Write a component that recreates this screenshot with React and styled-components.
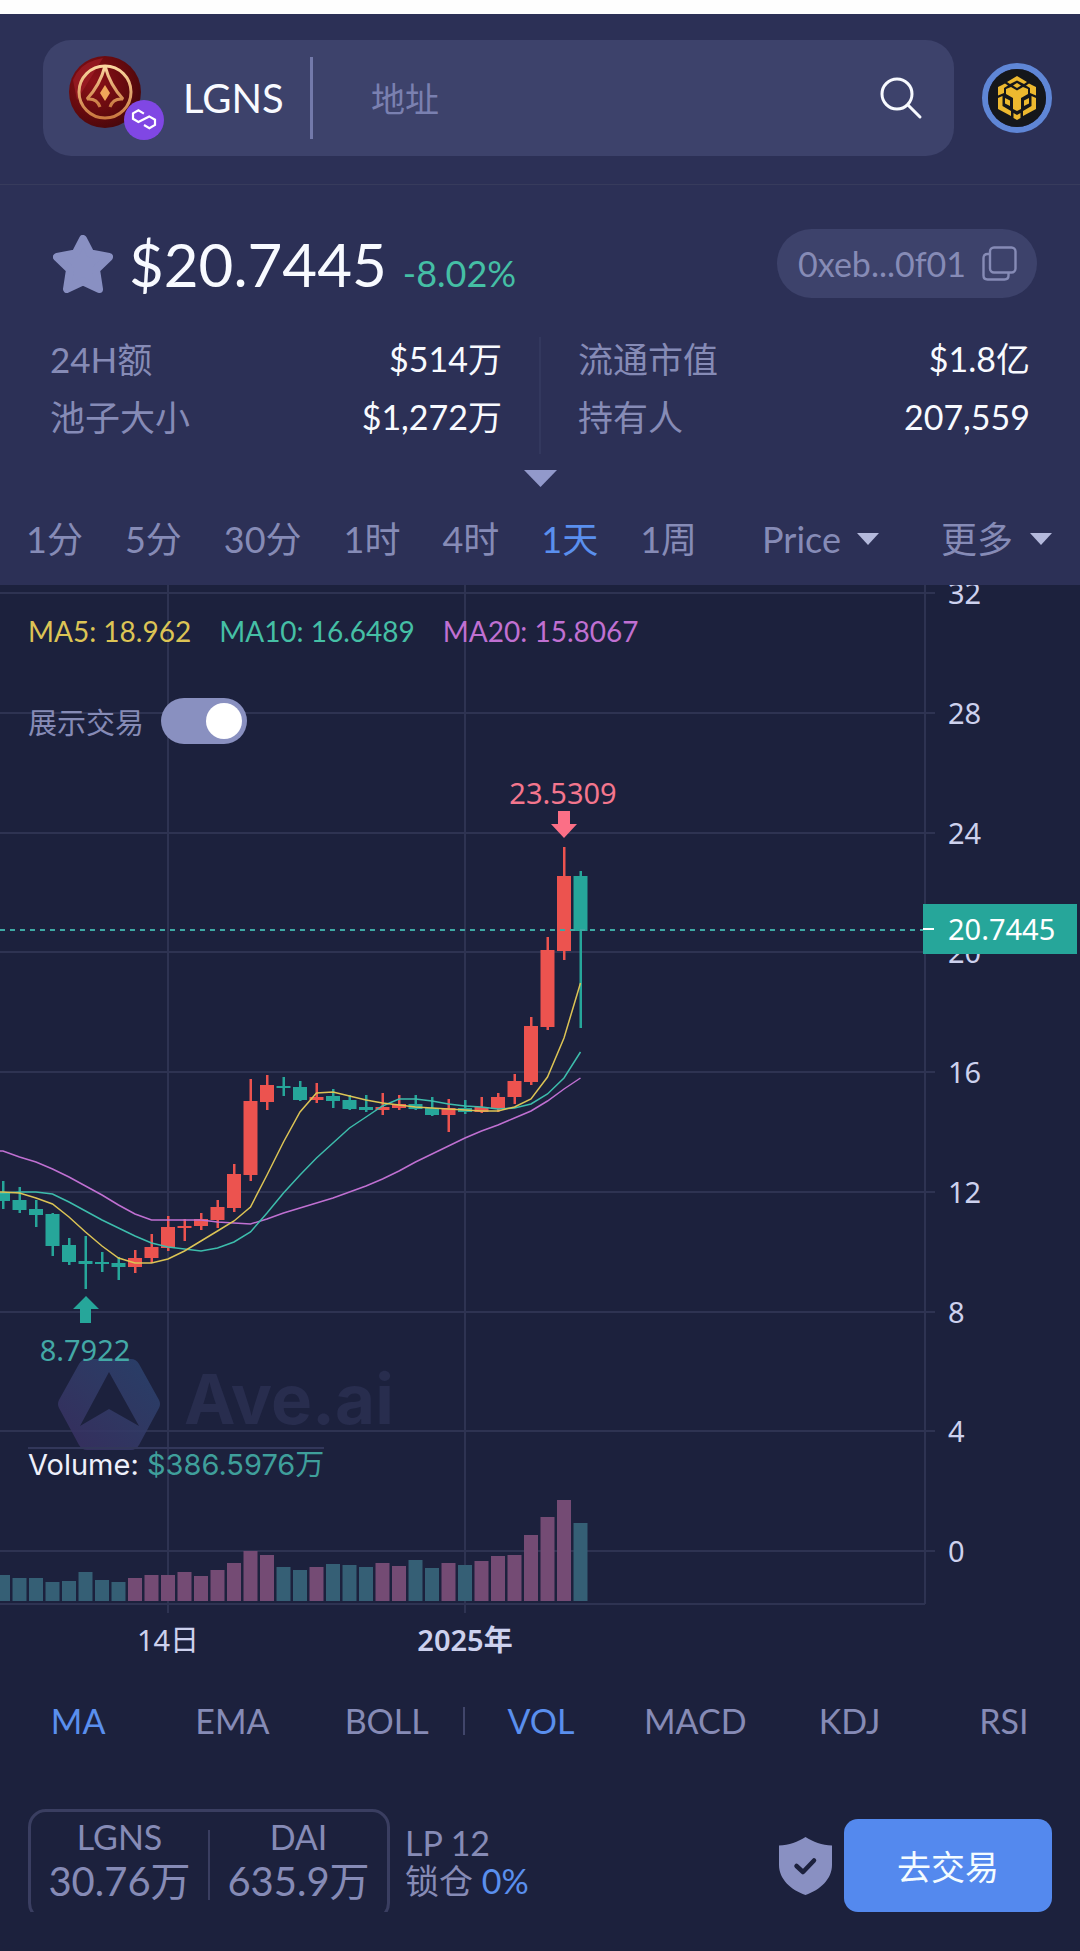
import React, { useState } from 'react'
import styled, { createGlobalStyle, ThemeProvider } from 'styled-components';

const theme = {
  colors: {
    panel: '#2c3056',
    field: '#3d426b',
    bg: '#1c213d',
    muted: '#868bb6',
    white: '#f8faff',
    blue: '#5a8fee',
    green: '#45bfa5',
    up: '#ec534f',
    down: '#26a69a',
    upVol: '#744b74',
    downVol: '#355f75',
    grid: '#2e3352',
    axis: '#cdd1ee',
    yellow: '#dcc455',
    purple: '#c070d2',
  },
};

const GlobalStyle = createGlobalStyle`
  * {
    box-sizing: border-box;
    margin: 0;
    padding: 0;
  }
  body {
    background: #1c213d;
    font-family: Lato, "Noto Sans CJK SC", sans-serif;
  }
  button, input, select {
    font: inherit;
    color: inherit;
    background: none;
    border: 0;
    outline: 0;
  }
  button, select {
    cursor: pointer;
  }
  svg {
    display: block;
    flex: none;
  }
`;

// [color, high, body top, body bottom, low, volume]
const candles = [
  ['d', 596, 608, 616, 624, 26],
  ['d', 602, 615, 625, 628, 23],
  ['d', 615, 624, 630, 642, 23],
  ['d', 628, 629, 661, 671, 19],
  ['d', 653, 660, 677, 680, 20],
  ['d', 651, 676, 679, 704, 29],
  ['d', 667, 677, 679, 687, 21],
  ['d', 672, 678, 682, 695, 19],
  ['u', 665, 673, 682, 688, 23],
  ['u', 649, 662, 673, 678, 26],
  ['u', 631, 642, 663, 666, 26],
  ['u', 634, 641, 643, 656, 29],
  ['u', 628, 634, 641, 645, 25],
  ['u', 615, 622, 635, 643, 31],
  ['u', 579, 589, 623, 627, 38],
  ['u', 494, 516, 590, 596, 50],
  ['u', 490, 500, 517, 525, 46],
  ['d', 492, 501, 503, 511, 34],
  ['d', 496, 502, 515, 516, 31],
  ['u', 498, 512, 515, 518, 34],
  ['d', 504, 511, 516, 523, 37],
  ['d', 510, 515, 524, 525, 36],
  ['d', 510, 522, 525, 527, 34],
  ['u', 508, 522, 525, 530, 38],
  ['u', 510, 519, 523, 525, 35],
  ['d', 510, 519, 524, 525, 41],
  ['d', 512, 523, 530, 531, 33],
  ['u', 514, 523, 530, 547, 38],
  ['d', 515, 523, 527, 529, 36],
  ['u', 512, 522, 527, 528, 40],
  ['u', 508, 512, 524, 527, 45],
  ['u', 489, 496, 512, 519, 46],
  ['u', 432, 441, 497, 500, 66],
  ['u', 352, 365, 442, 445, 84],
  ['u', 262, 291, 366, 375, 101],
  ['d', 286, 291, 346, 443, 78],
];

const ma5 = [607, 608, 613, 619, 632, 647, 661, 673, 678, 678, 674, 666, 656, 646, 636, 622, 590, 557, 527, 508, 507, 511, 515, 518, 520, 522, 523, 524, 525, 526, 526, 522, 514, 492, 453, 398];
const ma10 = [608, 607, 607, 609, 617, 626, 635, 643, 651, 658, 662, 664, 666, 663, 657, 647, 628, 608, 590, 573, 558, 543, 532, 521, 514, 514, 516, 519, 521, 522, 524, 523, 519, 509, 493, 467];
const ma20 = [566, 572, 577, 584, 592, 601, 610, 620, 629, 635, 635, 635, 635, 637, 638, 639, 634, 628, 623, 618, 613, 607, 601, 594, 586, 577, 569, 561, 553, 546, 540, 533, 526, 516, 504, 493];

const prices = [32, 28, 24, 20, 16, 12, 8, 4, 0];
const dates = [
  { x: 168, label: '14日' },
  { x: 465, label: '2025年', bold: true },
];

const periods = ['1分', '5分', '30分', '1时', '4时', '1天', '1周'];
const indicators = ['MA', 'EMA', 'BOLL', 'VOL', 'MACD', 'KDJ', 'RSI'];

const candleX = (i) => 3 + i * 16.5;
const priceY = (i) => 8 + Math.round(i * 119.75);
const linePoints = (values) =>
  [`0,${values[0]}`, ...values.map((y, i) => `${candleX(i)},${y}`)].join(' ');

const TokenLogo = () => (
  <svg width="72" height="72" viewBox="0 0 72 72" aria-hidden="true">
    <defs>
      <radialGradient id="tokenRed" cx="0.35" cy="0.35" r="0.75">
        <stop offset="0" stopColor="#8d1118" />
        <stop offset="0.6" stopColor="#640a0e" />
        <stop offset="1" stopColor="#43070b" />
      </radialGradient>
      <linearGradient id="tokenGold" x1="0" y1="0" x2="0" y2="1">
        <stop offset="0" stopColor="#fbd7a0" />
        <stop offset="1" stopColor="#c9783f" />
      </linearGradient>
    </defs>
    <circle cx="36" cy="36" r="36" fill="url(#tokenRed)" />
    <path d="M4 24A34 34 0 0 1 26 4L34 2L8 44Z" fill="#a5202a" opacity="0.6" />
    <circle cx="36" cy="36" r="26" fill="none" stroke="url(#tokenGold)" strokeWidth="3" />
    <path d="M36 10Q31 29 18 43Q28 42 31 51M36 10Q41 29 54 43Q44 42 41 51" fill="none" stroke="url(#tokenGold)" strokeWidth="3" strokeLinejoin="bevel" />
    <path d="M36 29L41 37L36 45L31 37Z" fill="#f0a75a" />
  </svg>
);

const PolygonLogo = () => (
  <svg width="40" height="40" viewBox="0 0 40 40" aria-hidden="true">
    <circle cx="20" cy="20" r="20" fill="#8047e4" />
    <path d="M19.9 13.6L14.4 10.2L9 13.3V18.8L14.4 22L25.2 16.4L31 19.7V24.9L25.4 28.2L20 25" fill="none" stroke="#fff" strokeWidth="2.2" />
  </svg>
);

const ChainLogo = () => (
  <svg width="58" height="58" viewBox="0 0 58 58" aria-hidden="true">
    <circle cx="29" cy="29" r="29" fill="#15171b" />
    <g fill="#edb92f">
      <path d="M29 7L39 13L36 15L29 11.500L22 15L19 13Z" />
      <path d="M29 14L33 16.500L29 19L25 16.500Z" />
      <path d="M10 18L17 14.500L20 16.500L16 19V24L10 26.500Z" />
      <path d="M48 18L41 14.500L38 16.500L42 19V24L48 26.500Z" />
      <path d="M18 20L23 18L29 21.500L35 18L40 20V25L33 29V40L29 42L25 40V29L18 25Z" />
      <path d="M10 29L14.500 27V37L23 42V47L10 40Z" />
      <path d="M48 29L43.500 27V37L35 42V47L48 40Z" />
      <path d="M17 29L22 31.500V37L17 34.500Z" />
      <path d="M41 29L36 31.500V37L41 34.500Z" />
      <path d="M25.500 44L29 46L32.500 44V49L29 51L25.500 49Z" />
    </g>
  </svg>
);

const SearchIcon = () => (
  <svg width="43" height="43" viewBox="0 0 43 43" fill="none" stroke="#f8faff" strokeWidth="3" strokeLinecap="round" aria-hidden="true">
    <circle cx="17" cy="17" r="15" />
    <path d="M28 28L40 40" />
  </svg>
);

const StarIcon = () => (
  <svg width="60" height="58" viewBox="0 0 60 58" fill="#8990c2" stroke="#8990c2" strokeWidth="8" strokeLinejoin="round" aria-hidden="true">
    <path d="M30 4L37.500 18.500L56 22L43 34.500L46 54L30 46.500L14 54L17 34.500L4 22L22.500 18.500Z" />
  </svg>
);

const CopyIcon = () => (
  <svg width="35" height="35" viewBox="0 0 35 35" fill="none" stroke="#868bb6" strokeWidth="2.400" aria-hidden="true">
    <rect x="8" y="1.500" width="25.500" height="25" rx="4" />
    <path d="M8 8H5.500Q1.500 8 1.500 12V29.500Q1.500 33.500 5.500 33.500H22.500Q26.500 33.500 26.500 29.500V26.500" />
  </svg>
);

const Caret = ({ width = 22, height = 12, color = '#b4b9dc' }) => (
  <svg width={width} height={height} viewBox="0 0 22 12" preserveAspectRatio="none" aria-hidden="true">
    <path d="M0 0H22L11 12Z" fill={color} />
  </svg>
);

const ShieldIcon = () => (
  <svg width="53" height="58" viewBox="0 0 53 58" aria-hidden="true">
    <path d="M26.500 0C34 5 43 8 53 8.500V28C53 42 41 53 26.500 58C12 53 0 42 0 28V8.500C10 8 19 5 26.500 0Z" fill="#8990c2" />
    <path d="M17.500 29L24 35L35 23.500" fill="none" stroke="#1c213d" strokeWidth="4.500" strokeLinecap="round" strokeLinejoin="round" />
  </svg>
);

const PriceChart = () => {
  const { colors } = theme;
  return (
    <ChartSvg viewBox="0 0 1080 1090" role="img" aria-label="LGNS K线图">
      <defs>
        <linearGradient id="waterLeft" x1="0" y1="1" x2="1" y2="0">
          <stop offset="0" stopColor="#3a2f62" />
          <stop offset="0.5" stopColor="#333b68" />
          <stop offset="1" stopColor="#2a4470" />
        </linearGradient>
      </defs>

      <g stroke={colors.grid} strokeWidth="2">
        {prices.map((p, i) => (
          <line key={p} x1="0" x2="935" y1={priceY(i)} y2={priceY(i)} />
        ))}
        {dates.map((d) => (
          <line key={d.label} x1={d.x} x2={d.x} y1="0" y2="1028" />
        ))}
        <line x1="925" x2="925" y1="0" y2="1019" />
        <line x1="0" x2="925" y1="1019" y2="1019" />
      </g>

      <path
        d="M87 774H131Q136 774 139 779L159 815Q161 819 159 823L139 860Q136 865 131 865H87Q82 865 79 860L59 823Q57 819 59 815L79 779Q82 774 87 774ZM109 787L80 841L109 824L139 841Z"
        fill="url(#waterLeft)"
        opacity="0.85"
      />
      <WaterText x="184" y="839">Ave.ai</WaterText>

      {candles.map(([dir, , , , , vol], i) => (
        <rect
          key={i}
          x={candleX(i) - 7}
          y={1016 - vol}
          width="14"
          height={vol}
          fill={dir === 'u' ? colors.upVol : colors.downVol}
        />
      ))}

      {candles.map(([dir, high, top, bottom, low], i) => (
        <g key={i} fill={dir === 'u' ? colors.up : colors.down}>
          <rect x={candleX(i) - 1} y={high} width="2.500" height={low - high} />
          <rect x={candleX(i) - 7} y={top} width="14" height={bottom - top} />
        </g>
      ))}

      <g fill="none" strokeWidth="1.500">
        <polyline points={linePoints(ma20)} stroke={colors.purple} />
        <polyline points={linePoints(ma10)} stroke="#3dbdac" />
        <polyline points={linePoints(ma5)} stroke={colors.yellow} />
      </g>

      <path d="M558 226H570V239H577L564 253L551 239H558Z" fill="#fb6f86" />
      <ChartText x="563" y="219" $anchor="middle" $color="#f4768d">23.5309</ChartText>
      <path d="M80 738H91V724H99L86 711L73 724H80Z" fill={colors.down} />
      <ChartText x="85" y="776" $anchor="middle" $color="#43a9a6">8.7922</ChartText>

      {prices.map((p, i) => (
        <ChartText key={p} x="948" y={priceY(i) + 11}>{p}</ChartText>
      ))}
      {dates.map((d) => (
        <ChartText key={d.label} x={d.x} y="1066" $anchor="middle" $bold={d.bold}>{d.label}</ChartText>
      ))}

      <line x1="0" x2="923" y1="345" y2="345" stroke="#3ea9a4" strokeWidth="2" strokeDasharray="5 5" />
      <rect x="923" y="319" width="154" height="50" fill={colors.down} />
      <line x1="923" x2="934" y1="344" y2="344" stroke="#fff" strokeWidth="2" />
      <ChartText x="948" y="355" $color="#fff">20.7445</ChartText>
    </ChartSvg>
  );
};

const App = () => {
  const [period, setPeriod] = useState('1天');
  const [active, setActive] = useState(['MA', 'VOL']);
  const [showTrades, setShowTrades] = useState(true);

  const toggleIndicator = (name) =>
    setActive(active.includes(name) ? active.filter((n) => n !== name) : [...active, name]);

  return (
    <ThemeProvider theme={theme}>
      <GlobalStyle />
      <Page>
        <Header>
          <TopBar>
            <SearchBox>
              <TokenIcon>
                <TokenLogo />
                <ChainBadge><PolygonLogo /></ChainBadge>
              </TokenIcon>
              <TokenName>LGNS</TokenName>
              <SearchInput type="text" placeholder="地址" aria-label="地址" />
              <IconButton aria-label="搜索"><SearchIcon /></IconButton>
            </SearchBox>
            <ChainButton aria-label="BNB Chain"><ChainLogo /></ChainButton>
          </TopBar>

          <PriceRow>
            <IconButton aria-label="收藏"><StarIcon /></IconButton>
            <Quote>
              <Price>$20.7445</Price>
              <Change>-8.02%</Change>
            </Quote>
            <AddressButton>
              0xeb...0f01
              <CopyIcon />
            </AddressButton>
          </PriceRow>

          <Stats>
            <StatColumn>
              <Stat><dt>24H额</dt><dd>$514万</dd></Stat>
              <Stat><dt>池子大小</dt><dd>$1,272万</dd></Stat>
            </StatColumn>
            <StatDivider />
            <StatColumn>
              <Stat><dt>流通市值</dt><dd>$1.8亿</dd></Stat>
              <Stat><dt>持有人</dt><dd>207,559</dd></Stat>
            </StatColumn>
          </Stats>
          <ExpandButton aria-label="展开">
            <Caret width={33} height={17} color="#9299cb" />
          </ExpandButton>

          <Periods>
            {periods.map((name) => (
              <PeriodButton key={name} $active={name === period} onClick={() => setPeriod(name)}>
                {name}
              </PeriodButton>
            ))}
            <Dropdowns>
              <SelectBox>
                <select aria-label="Price"><option>Price</option></select>
                <Caret />
              </SelectBox>
              <SelectBox>
                <select aria-label="更多"><option>更多</option></select>
                <Caret />
              </SelectBox>
            </Dropdowns>
          </Periods>
        </Header>

        <Chart>
          <PriceChart />
          <ChartOverlay>
            <Legend>
              <LegendItem $color={theme.colors.yellow}>MA5: 18.962</LegendItem>
              <LegendItem $color={theme.colors.green}>MA10: 16.6489</LegendItem>
              <LegendItem $color={theme.colors.purple}>MA20: 15.8067</LegendItem>
            </Legend>
            <SwitchLabel>
              展示交易
              <Switch
                type="checkbox"
                checked={showTrades}
                onChange={(e) => setShowTrades(e.target.checked)}
              />
            </SwitchLabel>
          </ChartOverlay>
          <VolumeLabel>Volume: <span>$386.5976万</span></VolumeLabel>
        </Chart>

        <Indicators>
          {indicators.map((name) => (
            <IndicatorButton
              key={name}
              $active={active.includes(name)}
              $divided={name === 'VOL'}
              onClick={() => toggleIndicator(name)}
            >
              {name}
            </IndicatorButton>
          ))}
        </Indicators>

        <Footer>
          <PoolClip>
            <Pool>
              <PoolCell><span>LGNS</span><strong>30.76万</strong></PoolCell>
              <PoolLine />
              <PoolCell><span>DAI</span><strong>635.9万</strong></PoolCell>
            </Pool>
          </PoolClip>
          <Lock>
            <p>LP 12</p>
            <p>锁仓 <b>0%</b></p>
          </Lock>
          <Actions>
            <IconButton aria-label="安全检测"><ShieldIcon /></IconButton>
            <TradeButton>去交易</TradeButton>
          </Actions>
        </Footer>
      </Page>
    </ThemeProvider>
  );
};

const Page = styled.main`
  min-height: 100vh;
  background: ${({ theme }) => theme.colors.bg};
  color: ${({ theme }) => theme.colors.muted};
  border-top: 14px solid #fefefe;
`;

const Header = styled.header`
  background: ${({ theme }) => theme.colors.panel};
`;

const TopBar = styled.div`
  display: flex;
  align-items: center;
  gap: 28px;
  padding: 26px 28px 28px 43px;
  border-bottom: 1px solid #373b5c;
`;

const SearchBox = styled.div`
  flex: 1;
  display: flex;
  align-items: center;
  height: 116px;
  padding: 0 31px 0 26px;
  border-radius: 28px;
  background: ${({ theme }) => theme.colors.field};
`;

const TokenIcon = styled.div`
  position: relative;
  width: 96px;
  height: 84px;
`;

const ChainBadge = styled.span`
  position: absolute;
  right: 1px;
  bottom: 0;
`;

const TokenName = styled.span`
  width: 148px;
  padding-left: 18px;
  border-right: 3px solid #7379aa;
  font-size: 40px;
  line-height: 82px;
  color: ${({ theme }) => theme.colors.white};
`;

const SearchInput = styled.input`
  flex: 1;
  min-width: 0;
  padding-left: 58px;
  font-size: 34px;
  &::placeholder {
    color: #7a80b0;
    opacity: 1;
  }
`;

const IconButton = styled.button`
  display: flex;
`;

const ChainButton = styled.button`
  display: flex;
  border: 6px solid #5f86d6;
  border-radius: 50%;
`;

const PriceRow = styled.div`
  display: flex;
  align-items: center;
  height: 113px;
  padding: 44px 43px 0 53px;
`;

const Quote = styled.div`
  display: flex;
  align-items: baseline;
  gap: 16px;
  margin-left: 16px;
`;

const Price = styled.h1`
  font-size: 60px;
  font-weight: 400;
  line-height: 68px;
  color: ${({ theme }) => theme.colors.white};
`;

const Change = styled.span`
  font-size: 36px;
  line-height: 36px;
  color: ${({ theme }) => theme.colors.green};
`;

const AddressButton = styled.button`
  display: flex;
  align-items: center;
  justify-content: space-between;
  width: 260px;
  height: 69px;
  margin-left: auto;
  padding: 0 20px 0 21px;
  border-radius: 35px;
  background: ${({ theme }) => theme.colors.field};
  font-size: 34px;
`;

const Stats = styled.div`
  display: flex;
  padding: 32px 50px 0;
`;

const StatColumn = styled.dl`
  flex: 1;
`;

const StatDivider = styled.div`
  width: 2px;
  height: 117px;
  margin: 7px 37px -9px;
  background: #33385e;
`;

const Stat = styled.div`
  display: flex;
  justify-content: space-between;
  line-height: 58px;
  dt {
    font-size: 35px;
  }
  dd {
    font-size: 34px;
    color: ${({ theme }) => theme.colors.white};
  }
`;

const ExpandButton = styled.button`
  display: block;
  margin: 24px auto 8px;
`;

const Periods = styled.nav`
  display: flex;
  align-items: center;
  gap: 42px;
  height: 90px;
  padding: 0 28px 2px 26px;
  font-size: 36px;
  line-height: 44px;
`;

const PeriodButton = styled.button`
  color: ${({ theme, $active }) => ($active ? theme.colors.blue : theme.colors.muted)};
`;

const Dropdowns = styled.div`
  flex: 1;
  display: flex;
  justify-content: flex-end;
  gap: 62px;
`;

const SelectBox = styled.div`
  display: flex;
  align-items: center;
  gap: 16px;
  select {
    appearance: none;
  }
`;

const Chart = styled.section`
  position: relative;
`;

const ChartSvg = styled.svg`
  width: 100%;
  height: auto;
`;

const ChartText = styled.text`
  font-family: "Noto Sans", "Noto Sans CJK SC", sans-serif;
  font-size: 29px;
  font-weight: ${({ $bold }) => ($bold ? 600 : 400)};
  text-anchor: ${({ $anchor }) => $anchor || 'start'};
  fill: ${({ theme, $color }) => $color || theme.colors.axis};
`;

const WaterText = styled.text`
  font-family: Inter, sans-serif;
  font-size: 69px;
  font-weight: 700;
  fill: #282d4e;
`;

const ChartOverlay = styled.div`
  position: absolute;
  top: 27px;
  left: 28px;
  display: flex;
  flex-direction: column;
  gap: 48px;
  font-size: 28px;
`;

const Legend = styled.div`
  display: flex;
  gap: 28px;
  line-height: 38px;
`;

const LegendItem = styled.span`
  color: ${({ $color }) => $color};
`;

const SwitchLabel = styled.label`
  display: flex;
  align-items: center;
  gap: 17px;
  font-size: 29px;
`;

const Switch = styled.input`
  appearance: none;
  display: flex;
  justify-content: ${({ checked }) => (checked ? 'flex-end' : 'flex-start')};
  width: 86px;
  height: 46px;
  padding: 5px;
  border-radius: 23px;
  background: #8990c0;
  &::before {
    content: '';
    width: 36px;
    height: 36px;
    border-radius: 50%;
    background: #fff;
  }
`;

const VolumeLabel = styled.p`
  position: absolute;
  left: 28px;
  bottom: 194px;
  border-top: 2px solid #32375a;
  font-family: Inter, "Noto Sans CJK SC", sans-serif;
  font-size: 29px;
  line-height: 32px;
  color: #eef0fb;
  span {
    color: #3f9f9b;
  }
`;

const Indicators = styled.div`
  display: grid;
  grid-template-columns: repeat(7, 1fr);
  align-items: center;
  height: 92px;
`;

const IndicatorButton = styled.button`
  border-left: 2px solid ${({ $divided }) => ($divided ? '#41466b' : 'transparent')};
  font-size: 34px;
  line-height: 28px;
  color: ${({ theme, $active }) => ($active ? theme.colors.blue : theme.colors.muted)};
`;

const Footer = styled.footer`
  display: flex;
  align-items: flex-end;
  padding: 42px 28px 39px;
`;

const PoolClip = styled.div`
  height: 103px;
  overflow: hidden;
`;

const Pool = styled.div`
  display: flex;
  width: 362px;
  height: 112px;
  border: 3px solid #3a3e61;
  border-radius: 18px;
`;

const PoolCell = styled.div`
  flex: 1;
  display: flex;
  flex-direction: column;
  align-items: center;
  padding-top: 2px;
  font-size: 34px;
  line-height: 45px;
  strong {
    font-size: 40px;
    font-weight: 400;
  }
`;

const PoolLine = styled.div`
  width: 2px;
  height: 70px;
  margin-top: 18px;
  background: #3a3e61;
`;

const Lock = styled.div`
  margin-left: 15px;
  padding-bottom: 12px;
  font-size: 34px;
  line-height: 38px;
  b {
    font-weight: 400;
    color: ${({ theme }) => theme.colors.blue};
  }
`;

const Actions = styled.div`
  display: flex;
  align-items: center;
  gap: 12px;
  margin-left: auto;
`;

const TradeButton = styled.button`
  width: 208px;
  height: 93px;
  border-radius: 14px;
  background: #5489ee;
  color: #f4fcff;
  font-size: 34px;
`;

export default App;
